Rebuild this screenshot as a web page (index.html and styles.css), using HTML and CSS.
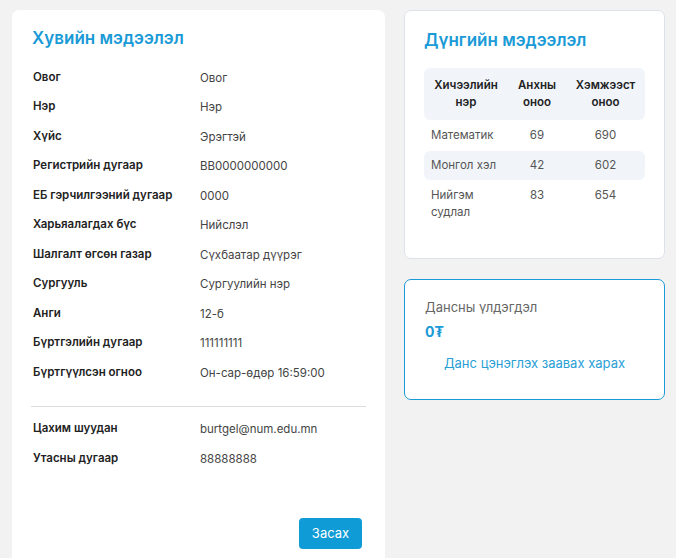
FILE: index.html
```html
<!DOCTYPE html>
<html lang="mn">
<head>
  <meta charset="UTF-8">
  <meta name="viewport" content="width=device-width, initial-scale=1.0">
  <title>Хувийн мэдээлэл</title>
  <link rel="stylesheet" href="styles.css">
</head>
<body>
  <div class="page">
    <div class="card info-card">
      <h2 class="card-title">Хувийн мэдээлэл</h2>

      <div class="info-list">
        <div class="info-row"><span class="info-label">Овог</span><span class="info-value">Овог</span></div>
        <div class="info-row"><span class="info-label">Нэр</span><span class="info-value">Нэр</span></div>
        <div class="info-row"><span class="info-label">Хүйс</span><span class="info-value">Эрэгтэй</span></div>
        <div class="info-row"><span class="info-label">Регистрийн дугаар</span><span class="info-value">BB0000000000</span></div>
        <div class="info-row"><span class="info-label">ЕБ гэрчилгээний дугаар</span><span class="info-value">0000</span></div>
        <div class="info-row"><span class="info-label">Харьяалагдах бүс</span><span class="info-value">Нийслэл</span></div>
        <div class="info-row"><span class="info-label">Шалгалт өгсөн газар</span><span class="info-value">Сүхбаатар дүүрэг</span></div>
        <div class="info-row"><span class="info-label">Сургууль</span><span class="info-value">Сургуулийн нэр</span></div>
        <div class="info-row"><span class="info-label">Анги</span><span class="info-value">12-б</span></div>
        <div class="info-row"><span class="info-label">Бүртгэлийн дугаар</span><span class="info-value">111111111</span></div>
        <div class="info-row"><span class="info-label">Бүртгүүлсэн огноо</span><span class="info-value">Он-сар-өдөр 16:59:00</span></div>
      </div>

      <hr class="divider">

      <div class="info-list">
        <div class="info-row"><span class="info-label">Цахим шуудан</span><span class="info-value">burtgel@num.edu.mn</span></div>
        <div class="info-row"><span class="info-label">Утасны дугаар</span><span class="info-value">88888888</span></div>
      </div>

      <div class="actions">
        <button class="btn-edit">Засах</button>
      </div>
    </div>

    <div class="side">
      <div class="card score-card">
        <h2 class="card-title">Дүнгийн мэдээлэл</h2>
        <table class="score-table">
          <thead>
            <tr>
              <th class="col-name">Хичээлийн нэр</th>
              <th class="col-raw">Анхны оноо</th>
              <th class="col-scaled">Хэмжээст оноо</th>
            </tr>
          </thead>
          <tbody>
            <tr><td>Математик</td><td>69</td><td>690</td></tr>
            <tr class="striped"><td>Монгол хэл</td><td>42</td><td>602</td></tr>
            <tr><td>Нийгэм судлал</td><td>83</td><td>654</td></tr>
          </tbody>
        </table>
      </div>

      <div class="card balance-card">
        <div class="balance-label">Дансны үлдэгдэл</div>
        <div class="balance-amount">0₮</div>
        <a class="balance-link" href="#">Данс цэнэглэх заавах харах</a>
      </div>
    </div>
  </div>
</body>
</html>
```

FILE: styles.css
```css
html, body {
  margin: 0;
  height: 100%;
  overflow: hidden;
}

body {
  font-family: "Inter", "Noto Sans", sans-serif;
  background-color: #f2f2f2;
  color: #222;
}

.page {
  display: flex;
  align-items: flex-start;
  gap: 19px;
  padding: 10px 11px 0 12px;
}

.card {
  background-color: #fff;
  border-radius: 7px;
  box-sizing: border-box;
}

.card-title {
  margin: 0;
  font-size: 17px;
  line-height: 22px;
  font-weight: 600;
  color: #1a9ad6;
}

/* Personal info */
.info-card {
  width: 373px;
  padding: 17px 19px 20px;
}

.info-card .card-title {
  padding-left: 1px;
}

.info-card .card-title + .info-list {
  margin-top: 13px;
}

.info-row {
  display: flex;
  align-items: center;
  height: 29.5px;
  padding-left: 2px;
}

.info-label {
  width: 167px;
  flex-shrink: 0;
  font-size: 11.5px;
  font-weight: 600;
  color: #222;
}

.info-value {
  font-size: 11.5px;
  color: #444;
  padding-top: 2px;
}

.divider {
  border: none;
  border-top: 1px solid #dcdcdc;
  margin: 19px 0 7px;
}

.actions {
  display: flex;
  justify-content: flex-end;
  margin-top: 45px;
  padding-right: 4px;
}

.btn-edit {
  background-color: #0e9bd6;
  color: #fff;
  border: none;
  border-radius: 4px;
  font-family: inherit;
  font-size: 13px;
  width: 63px;
  height: 31px;
  cursor: pointer;
}

/* Right column */
.side {
  width: 261px;
  display: flex;
  flex-direction: column;
  gap: 20px;
}

.score-card {
  border: 1px solid #dde2ea;
  padding: 18px 19px 30px;
}

.score-table {
  width: 100%;
  margin-top: 17px;
  border-collapse: separate;
  border-spacing: 0;
  font-size: 11.5px;
}

.score-table thead th {
  background-color: #f1f5fa;
  font-weight: 600;
  color: #222;
  line-height: 17px;
  padding: 9px 4px;
  text-align: center;
}

.score-table th:first-child {
  border-radius: 6px 0 0 6px;
}

.score-table th:last-child {
  border-radius: 0 6px 6px 0;
}

.col-name { width: 76px; }
.col-raw { width: 50px; }

.score-table td {
  color: #555;
  line-height: 17px;
  padding: 7px 7px;
  text-align: center;
  vertical-align: top;
}

.score-table td:first-child {
  text-align: left;
}

.score-table tr.striped td {
  background-color: #f1f5fa;
  padding-top: 6px;
  padding-bottom: 6px;
}

.score-table tr.striped td:first-child {
  border-radius: 6px 0 0 6px;
}

.score-table tr.striped td:last-child {
  border-radius: 0 6px 6px 0;
}

/* Balance */
.balance-card {
  border: 1px solid #1a9ad6;
  height: 121px;
  padding: 18px 20px;
}

.balance-label {
  font-size: 13px;
  color: #666;
  line-height: 18px;
}

.balance-amount {
  margin-top: 7px;
  font-size: 14px;
  font-weight: 700;
  color: #1a9ad6;
  line-height: 18px;
}

.balance-link {
  display: block;
  margin-top: 14px;
  text-align: center;
  font-size: 13px;
  color: #2a9fd6;
  text-decoration: none;
}
```
